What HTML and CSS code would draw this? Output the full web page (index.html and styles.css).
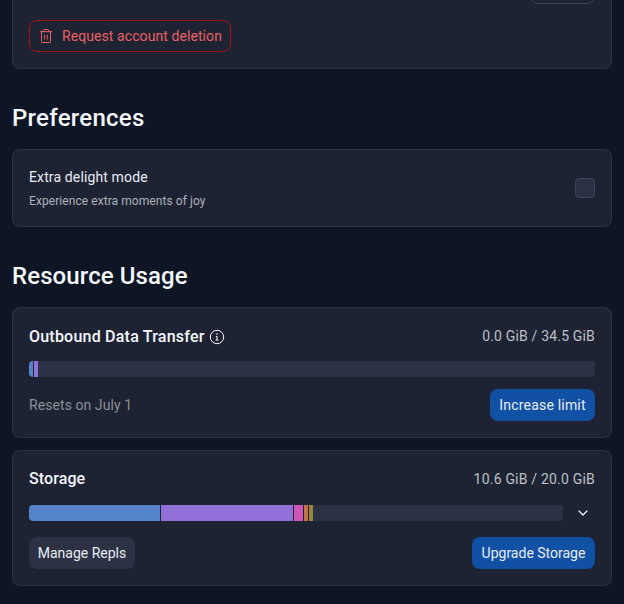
FILE: index.html
```
<!DOCTYPE html>
<html lang="en">
<head>
<meta charset="utf-8">
<title>Account</title>
<link rel="stylesheet" href="styles.css">
</head>
<body>
<main class="page">
  <section class="card card-account">
    <div class="account-row"><button class="btn btn-outline" aria-label="Export"></button></div>
    <button class="btn btn-danger">
      <svg class="icon-trash" width="16" height="16" viewBox="0 0 16 16" fill="none" stroke="currentColor" stroke-linecap="round" stroke-linejoin="round"><path d="M2.300 3.700h11.400M5.500 3.700V2.300a.8.8 0 0 1 .8-.8h3.400a.8.8 0 0 1 .8.8v1.400M3.500 3.700v10a.8.8 0 0 0 .8.8h7.400a.8.8 0 0 0 .8-.8v-10M6.700 7.300v3.800M9.300 7.300v3.800"/></svg>
      <span class="t-request">Request account deletion</span>
    </button>
  </section>

  <h2 class="heading"><span class="t-preferences">Preferences</span></h2>
  <section class="card card-preference">
    <div class="labels">
      <div class="label"><span class="t-delight">Extra delight mode</span></div>
      <div class="hint"><span class="t-hint">Experience extra moments of joy</span></div>
    </div>
    <div class="checkbox"></div>
  </section>

  <h2 class="heading"><span class="t-resource">Resource Usage</span></h2>
  <section class="card card-transfer">
    <div class="row title-row">
      <h3 class="title title-low"><span class="t-outbound">Outbound Data Transfer</span>
        <svg class="icon-info" width="16" height="16" viewBox="0 0 16 16" fill="none" stroke="currentColor" stroke-width="1"><circle cx="8" cy="8" r="6.700"/><path d="M8 7.200v4M6.900 7.500H8M6.700 11h2.600"/><circle cx="8" cy="5" r=".45" fill="currentColor" stroke-width=".6"/></svg>
      </h3>
      <span class="amount t-amount-a">0.0 GiB / 34.5 GiB</span>
    </div>
    <div class="meter"><i class="seg blue s4"></i><i class="seg purple s4"></i></div>
    <div class="row actions">
      <span class="resets t-resets">Resets on July 1</span>
      <button class="btn btn-primary btn-limit"><span class="t-limit">Increase limit</span></button>
    </div>
  </section>

  <section class="card card-storage">
    <div class="row title-row">
      <h3 class="title"><span class="t-storage">Storage</span></h3>
      <span class="amount t-amount-b">10.6 GiB / 20.0 GiB</span>
    </div>
    <div class="row meter-row">
      <div class="meter"><i class="seg blue s131"></i><i class="seg purple s132"></i><i class="seg pink s9"></i><i class="seg orange s4"></i><i class="seg olive s4"></i></div>
      <svg class="icon-chevron" width="16" height="16" viewBox="0 0 16 16" fill="none" stroke="currentColor" stroke-width="1.200" stroke-linecap="round" stroke-linejoin="round"><path d="M4 6l4 4 4-4"/></svg>
    </div>
    <div class="row actions">
      <button class="btn btn-secondary"><span class="t-manage">Manage Repls</span></button>
      <button class="btn btn-primary btn-upgrade"><span class="t-upgrade">Upgrade Storage</span></button>
    </div>
  </section>
</main>
</body>
</html>
```
FILE: styles.css
```
* { box-sizing: border-box; }
body {
  margin: 0;
  height: 604px;
  overflow: hidden;
  background: #0e1525;
  color: #f5f9fc;
  font: 14px/20px Roboto, "Noto Sans", sans-serif;
}
.page { padding: 0 12px; }
h2, h3 { margin: 0; font-weight: 500; }
.card {
  border: 1px solid #2b3245;
  border-radius: 8px;
  background: #1e2333;
  padding: 0 16px;
}
.row { display: flex; align-items: center; justify-content: space-between; }
.btn {
  display: flex;
  align-items: center;
  justify-content: center;
  height: 32px;
  padding: 0;
  border: 0;
  border-radius: 8px;
  color: #e8edf3;
  font: inherit;
  white-space: nowrap;
}
.card-account { height: 69px; border-top: 0; border-radius: 0 0 8px 8px; }
.account-row { display: flex; justify-content: flex-end; align-items: flex-end; height: 4px; margin-bottom: 16px; }
.btn-outline { width: 65px; background: none; border: 1px solid #3c445c; flex: none; }
.btn-danger {
  justify-content: flex-start;
  gap: 8px;
  width: 202px;
  padding-left: 8px;
  border: 1px solid #a60f15;
  background: none;
  color: #ea6065;
}
.heading { height: 80px; padding-top: 33px; font-size: 24px; line-height: 32px; }
.card-preference { display: flex; align-items: center; justify-content: space-between; height: 78px; }
.label { height: 23px; color: #e8edf3; }
.hint { height: 20px; font-size: 12px; line-height: 22px; color: #adb2ba; }
.checkbox { width: 20px; height: 20px; border: 1px solid #3c445c; border-radius: 4px; background: #2c3144; }
.card-transfer { height: 131px; margin-bottom: 12px; padding-top: 16px; }
.card-storage { height: 136px; padding-top: 16px; }
.title-row { height: 24px; }
.title { display: flex; align-items: center; gap: 4px; font-size: 16px; line-height: 24px; }
.title-low { padding-top: 2px; }
.amount { color: #bbc0c6; }
.meter {
  display: flex;
  gap: 1px;
  width: 566px;
  height: 16px;
  overflow: hidden;
  border-radius: 4px;
  background: #2c3144;
}
.card-transfer .meter { margin: 13px 0 12px; }
.meter-row { height: 16px; margin: 14px 0 16px; }
.meter-row .meter { width: 534px; }
.icon-chevron { margin-right: 4px; }
.seg { height: 16px; box-shadow: 1px 0 #1e2333; }
.seg:last-child { box-shadow: none; }
.s4 { width: 4px; }
.s9 { width: 9px; }
.s131 { width: 131px; }
.s132 { width: 132px; }
.blue { background: #5585c8; }
.purple { background: #9170d8; }
.pink { background: #cb56b4; }
.orange { background: #c17246; }
.olive { background: #968443; }
.resets { color: #8b9098; }
.btn-primary { background: #1051a5; }
.btn-secondary { width: 106px; background: #2c3144; }
.btn-limit { width: 105px; }
.btn-upgrade { width: 123px; }
.t-request { letter-spacing: .08px; }
.t-preferences { letter-spacing: .26px; }
.t-delight { letter-spacing: .13px; }
.t-hint { letter-spacing: .07px; }
.t-resource { letter-spacing: .1px; }
.t-outbound { letter-spacing: .22px; }
.t-amount-a { letter-spacing: .17px; }
.t-amount-b { letter-spacing: .2px; padding-bottom: 1px; }
.t-resets { letter-spacing: .07px; }
.t-limit { letter-spacing: .2px; }
.t-storage { letter-spacing: .1px; }
```
